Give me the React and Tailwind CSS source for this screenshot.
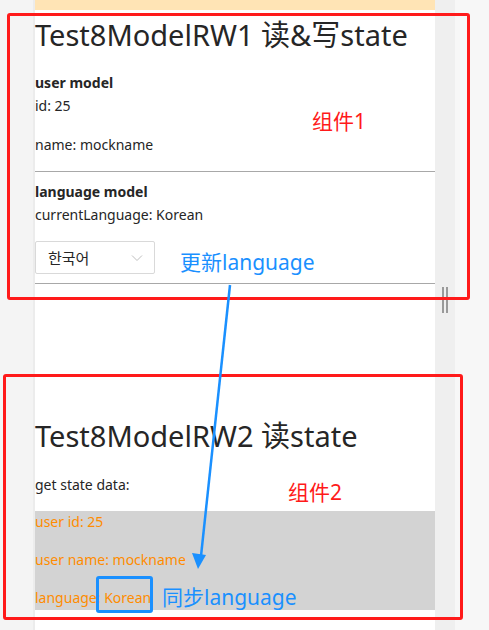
import React from 'react';

const font = { fontFamily: '"Noto Sans", "Noto Sans CJK SC", sans-serif' };

// annotation layer drawn over the page
function Annotations() {
  return (
    <>
      <div className="absolute left-[7px] top-[13px] w-[463px] h-[287px] border-[3px] border-[#ff1a1a] rounded-[3px]" />
      <div className="absolute left-[3px] top-[374px] w-[460px] h-[246px] border-[3px] border-[#ff1a1a] rounded-[3px]" />
      <div className="absolute left-[312px] top-[106px] text-[21px] leading-[30px] text-[#ff1a1a]">组件1</div>
      <div className="absolute left-[288px] top-[477px] text-[21px] leading-[30px] text-[#ff1a1a]">组件2</div>
      <div className="absolute left-[180px] top-[247px] text-[21px] leading-[30px] text-[#1a90ff]">更新language</div>
      <div className="absolute left-[162px] top-[582px] text-[21px] leading-[30px] text-[#1a90ff]">同步language</div>
      <div className="absolute left-[96px] top-[576px] w-[57px] h-[37px] border-[3px] border-[#1a90ff] rounded-[3px]" />
      <svg className="absolute left-0 top-0" width="489" height="630">
        <path d="M230 285 L201 556" stroke="#1a90ff" strokeWidth="2.5" fill="none" />
        <path d="M192 553 L198 569 L206 555 Z" fill="#1a90ff" />
      </svg>
    </>
  );
}

export default function App() {
  return (
    <div className="relative flex w-[489px] h-[630px] overflow-hidden bg-[#f7f7f7]" style={font}>
      <div className="w-[35px] shrink-0 bg-[#f4f4f4] border-r-[2px] border-[#ececec]" />
      <div className="w-[400px] shrink-0 bg-white text-[14px] leading-[22px] text-[#262626]">
        <div className="h-[10px] bg-[#ffe4b5]" />
        <h1 className="mt-[5px] text-[29px] leading-[40px] font-normal">Test8ModelRW1 读&amp;写state</h1>
        <div className="mt-[17px] font-bold">user model</div>
        <p className="mt-[1px]">id: 25</p>
        <p className="mt-[17px]">name: mockname</p>
        <hr className="mt-[15px] border-0 border-t-[1px] border-[#a8a8a8]" />
        <div className="mt-[9px] font-bold">language model</div>
        <p className="mt-[1px]">currentLanguage: Korean</p>
        <div className="mt-[15px] w-[120px] h-[33px] flex items-center justify-between pl-[12px] pr-[11px] border border-[#d9d9d9] rounded-[2px]">
          <span className="text-[15px]" style={{ fontFamily: '"Noto Sans CJK KR", sans-serif' }}>한국어</span>
          <svg width="12" height="12" viewBox="0 0 12 12">
            <path d="M1 3.5 L6 8.5 L11 3.5" stroke="#bfbfbf" strokeWidth="1" fill="none" />
          </svg>
        </div>
        <hr className="mt-[9px] border-0 border-t-[1px] border-[#a8a8a8]" />
        <h1 className="mt-[132px] text-[29px] leading-[40px] font-normal">Test8ModelRW2 读state</h1>
        <p className="mt-[18px]">get state data:</p>
        <div className="mt-[15px] bg-[#d3d3d3] text-[#ff8c00] flex flex-col gap-[16px] pb-[1px]">
          <p>user id: 25</p>
          <p>user name: mockname</p>
          <p>language: Korean</p>
        </div>
      </div>
      <div className="w-[20px] shrink-0 bg-[#efefef] flex justify-center">
        <div className="mt-[287px] h-[26px] flex gap-[2px]">
          <div className="w-[2px] bg-[#9a9a9a]" />
          <div className="w-[2px] bg-[#9a9a9a]" />
        </div>
      </div>
      <div className="flex-1" />
      <Annotations />
    </div>
  );
}
